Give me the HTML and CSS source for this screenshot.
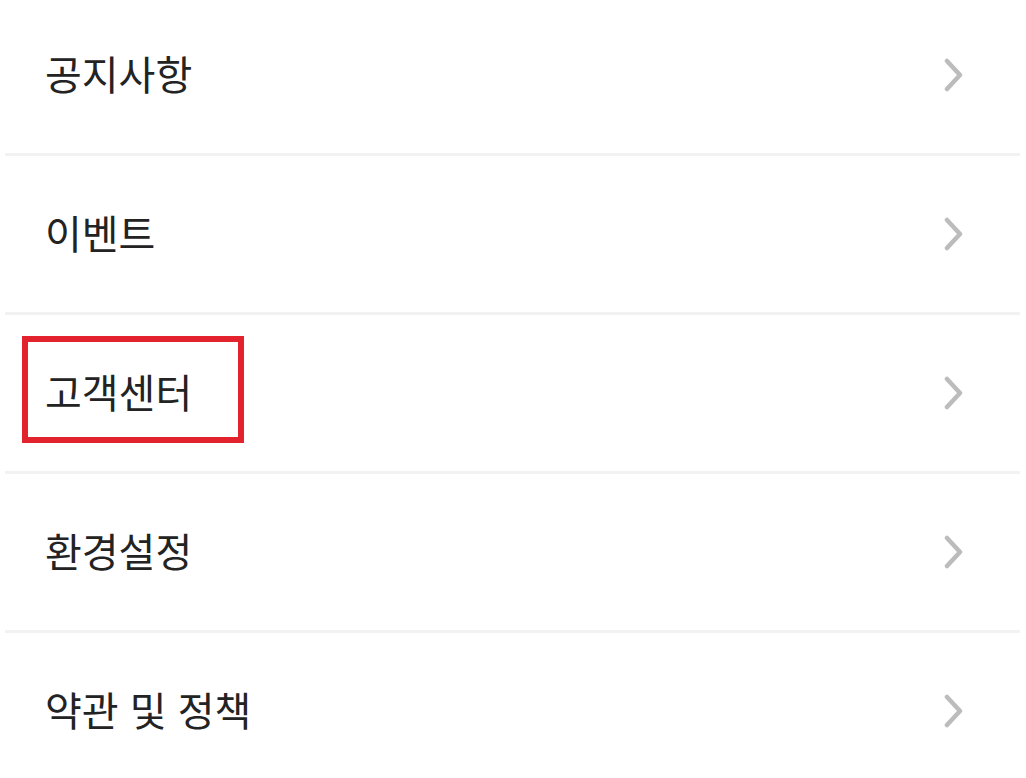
FILE: index.html
```html
<!DOCTYPE html>
<html lang="ko">
<head>
<meta charset="utf-8">
<link rel="stylesheet" href="styles.css">
</head>
<body>
<ul class="menu">
  <li class="row"><span class="label">공지사항</span><svg class="chev" viewBox="0 0 20 34"><path d="M3 3 L16 17 L3 31"/></svg></li>
  <li class="row"><span class="label">이벤트</span><svg class="chev" viewBox="0 0 20 34"><path d="M3 3 L16 17 L3 31"/></svg></li>
  <li class="row"><span class="label highlight">고객센터</span><svg class="chev" viewBox="0 0 20 34"><path d="M3 3 L16 17 L3 31"/></svg></li>
  <li class="row"><span class="label">환경설정</span><svg class="chev" viewBox="0 0 20 34"><path d="M3 3 L16 17 L3 31"/></svg></li>
  <li class="row"><span class="label">약관 및 정책</span><svg class="chev" viewBox="0 0 20 34"><path d="M3 3 L16 17 L3 31"/></svg></li>
</ul>
</body>
</html>
```

FILE: styles.css
```css
html, body {
  margin: 0;
  padding: 0;
  background: #ffffff;
}
body {
  width: 1026px;
  height: 778px;
  overflow: hidden;
  font-family: "Noto Sans CJK KR", "Noto Sans", sans-serif;
  color: #232323;
}
.menu {
  list-style: none;
  margin: -3px 0 0 0;
  padding: 0;
}
.row {
  height: 156px;
  display: flex;
  align-items: center;
  justify-content: space-between;
  padding: 0 56px 0 40px;
  margin: 0 6px 0 5px;
  border-bottom: 3px solid #f2f2f2;
}
.row:last-child {
  border-bottom: none;
}
.label {
  position: relative;
  font-size: 40px;
  font-weight: 400;
  line-height: 40px;
  letter-spacing: 0;
  margin-top: -4px;
}
.highlight::after {
  content: "";
  position: absolute;
  left: -23px;
  top: -35px;
  width: 210px;
  height: 95px;
  border: 6px solid #e2222c;
}
.chev {
  width: 20px;
  height: 34px;
  fill: none;
  stroke: #bcbcbc;
  stroke-width: 4.5;
  stroke-linecap: round;
  stroke-linejoin: round;
}
```
